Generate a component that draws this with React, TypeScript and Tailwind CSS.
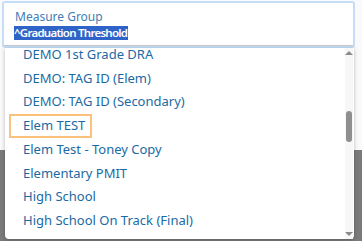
import React from "react";

const items = [
  "DEMO 1st Grade DRA",
  "DEMO: TAG ID (Elem)",
  "DEMO: TAG ID (Secondary)",
  "Elem TEST",
  "Elem Test - Toney Copy",
  "Elementary PMIT",
  "High School",
  "High School On Track (Final)",
];

const App = () => {
  return (
    <div className="relative w-[362px] h-[241px] overflow-hidden bg-[#7b7b7b] font-['Noto_Sans',sans-serif]">
      <div className="h-[150px] bg-[#fafafa]"></div>

      {/* select input */}
      <div className="absolute left-[2px] top-[1px] w-[353px] h-[47px] rounded-[3px] border-2 border-[#c4def9] bg-white">
        <div className="h-full border-b border-[#c9c9c9] pl-[10px] pt-[6px]">
          <div className="pl-[1px] text-[12px] leading-[16px] text-[#3f7db4]">Measure Group</div>
          <div className="flex mt-[1px]">
            <span className="inline-block bg-[#2e63c7] text-white text-[11.5px] leading-[14px] font-semibold tracking-[-0.75px] pr-[1px]">
              ^Graduation Threshold
            </span>
          </div>
        </div>
      </div>

      {/* dropdown list */}
      <div className="absolute left-[5px] top-[48px] w-[349px] h-[191px] bg-white rounded-b-[4px] shadow-[0_1px_4px_rgba(0,0,0,0.25)] flex">
        <ul className="flex-1 -mt-[5px]">
          {items.map((item, index) => (
            <li key={index} className="h-[23.7px] flex items-center pl-[4px]">
              <span
                className={
                  item === "Elem TEST"
                    ? "h-[24px] w-[83px] flex items-center pl-[12px] border-2 border-[#fcc27c] text-[13px] text-[#1b6aa3]"
                    : "pl-[14px] text-[13px] text-[#1b6aa3]"
                }
              >
                {item}
              </span>
            </li>
          ))}
        </ul>
        <div className="w-[8px] mr-[1px] bg-[#f7f7f7] flex flex-col items-center justify-between py-[3px]">
          <div className="w-0 h-0 border-x-[4px] border-x-transparent border-b-[4px] border-b-[#8a8a8a]"></div>
          <div className="flex-1 w-full flex flex-col pt-[56px]">
            <div className="w-[6px] h-[31px] mx-auto rounded-[3px] bg-[#8f8f8f]"></div>
          </div>
          <div className="w-0 h-0 border-x-[4px] border-x-transparent border-t-[4px] border-t-[#8a8a8a]"></div>
        </div>
      </div>
    </div>
  );
};

export default App;
